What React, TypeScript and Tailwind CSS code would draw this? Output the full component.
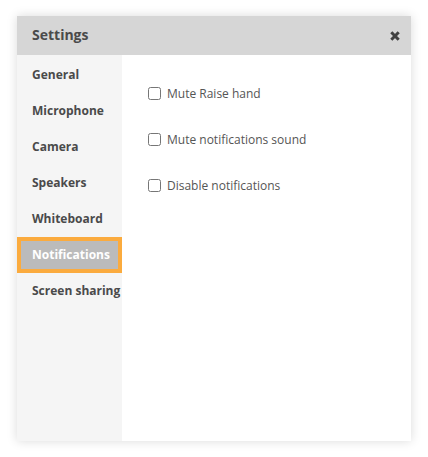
export default function App() {
  const items = ["General", "Microphone", "Camera", "Speakers", "Whiteboard", "Notifications", "Screen sharing"];
  const checks = ["Mute Raise hand", "Mute notifications sound", "Disable notifications"];
  return (
    <div className="w-[428px] h-[457px] bg-white pt-4 pl-[17px] font-['Open_Sans',sans-serif]">
      <div className="w-[394px] h-[425px] flex flex-col bg-white shadow-[0_0_10px_rgba(0,0,0,0.15)]">
        <div className="h-[39px] bg-[#d6d6d6] flex items-center justify-between pl-[15px] pr-[11px] pb-[2px] shrink-0">
          <span className="text-[14px] font-bold text-[#4a4a4a]">Settings</span>
          <svg width="10" height="10" viewBox="0 0 10 10" className="mt-[2px]">
            <path d="M1.3 1.3 L8.7 8.7 M8.7 1.3 L1.3 8.7" stroke="#404040" strokeWidth="3" />
          </svg>
        </div>
        <div className="flex flex-1">
          <div className="w-[105px] bg-[#f5f5f5] pt-[2px] shrink-0">
            {items.map((t) =>
              t === "Notifications" ? (
                <div key={t} className="h-9 flex items-center pl-[11px] border-4 border-[#fbab3e] bg-[#bbbbbb] text-white text-[12px] font-bold whitespace-nowrap">
                  {t}
                </div>
              ) : (
                <div key={t} className="h-9 flex items-center pl-[15px] text-[#4a4a4a] text-[12px] font-bold whitespace-nowrap">
                  {t}
                </div>
              )
            )}
          </div>
          <div className="flex-1 pl-[26px] pt-[30px] flex flex-col gap-[28px]">
            {checks.map((c) => (
              <label key={c} className="h-[18px] flex items-center gap-[6px] text-[12px] text-[#555555]">
                <span className="w-[13px] h-[13px] mb-px rounded-[2.5px] border border-[#767676] bg-white shrink-0" />
                {c}
              </label>
            ))}
          </div>
        </div>
      </div>
    </div>
  );
}
